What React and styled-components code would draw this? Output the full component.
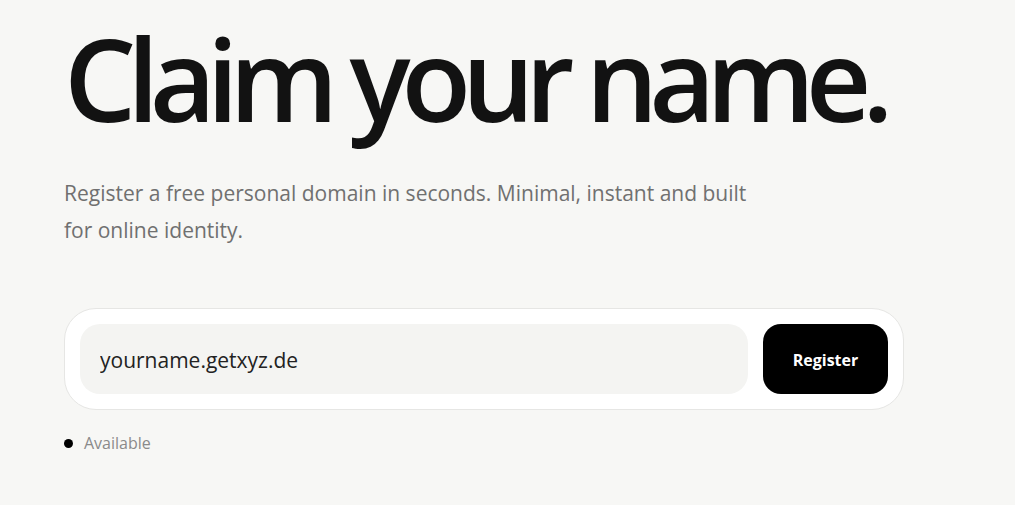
import styled, { createGlobalStyle } from 'styled-components';

const GlobalStyle = createGlobalStyle`
  html, body {
    margin: 0;
    padding: 0;
    background: #f7f7f5;
  }
  body {
    font-family: "Open Sans", "Noto Sans", sans-serif;
    color: #111;
  }
`;

const Page = styled.main`
  min-height: 505px;
  padding: 21px 0 0 64px;
  box-sizing: border-box;
`;

const Title = styled.h1`
  margin: 0;
  font-size: 114px;
  font-weight: 600;
  line-height: 1;
  letter-spacing: -0.08em;
  color: #121212;
`;

const Lead = styled.p`
  margin: 40px 0 0;
  max-width: 700px;
  font-size: 21px;
  line-height: 37px;
  color: #707070;
`;

const SearchCard = styled.form`
  margin-top: 59px;
  width: 840px;
  height: 102px;
  box-sizing: border-box;
  padding: 15px;
  display: flex;
  gap: 15px;
  background: #fff;
  border: 1px solid #e6e6e4;
  border-radius: 32px;
`;

const DomainInput = styled.input`
  flex: 1;
  min-width: 0;
  height: 70px;
  box-sizing: border-box;
  padding: 2px 20px 0;
  border: none;
  outline: none;
  border-radius: 20px;
  background: #f4f4f2;
  font-family: inherit;
  font-size: 21px;
  color: #222;
`;

const RegisterButton = styled.button`
  width: 125px;
  height: 70px;
  border: none;
  border-radius: 18px;
  background: #000;
  color: #fff;
  font-family: inherit;
  font-size: 16px;
  font-weight: 700;
  padding-top: 2px;
  cursor: pointer;
`;

const Status = styled.div`
  margin-top: 23px;
  display: flex;
  align-items: center;
  gap: 11px;
  font-size: 16px;
  line-height: 20px;
  color: #8a8a8a;
`;

const Dot = styled.span`
  width: 9px;
  height: 9px;
  border-radius: 50%;
  background: ${({ $color }) => $color};
`;

export default function App() {
  return (
    <>
      <GlobalStyle />
      <Page>
        <Title>Claim your name.</Title>
        <Lead>
          Register a free personal domain in seconds. Minimal, instant and built
          for online identity.
        </Lead>
        <SearchCard onSubmit={(e) => e.preventDefault()}>
          <DomainInput defaultValue="yourname.getxyz.de" aria-label="Domain" />
          <RegisterButton type="submit">Register</RegisterButton>
        </SearchCard>
        <Status>
          <Dot $color="#000" />
          Available
        </Status>
      </Page>
    </>
  );
}
